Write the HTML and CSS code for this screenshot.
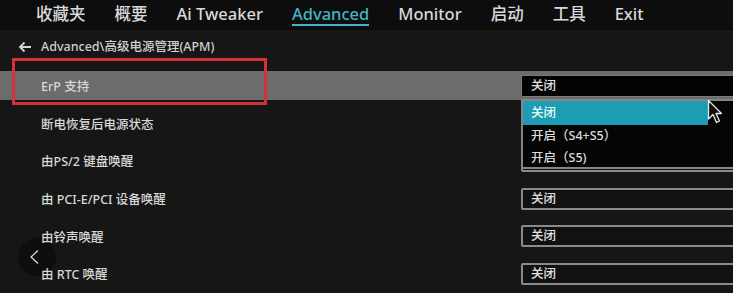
FILE: index.html
```html
<!DOCTYPE html>
<html lang="zh-CN">
<head>
<meta charset="utf-8">
<title>Advanced\高级电源管理(APM)</title>
<link rel="stylesheet" href="styles.css">
</head>
<body>
<div class="screen">
  <div class="back">
    <svg width="14" height="18" viewBox="0 0 14 18">
      <path d="M10 2.5 L3 9 L10 15.5" fill="none" stroke="#dcdcdc" stroke-width="1.2"/>
    </svg>
  </div>
  <nav class="nav">
    <span class="nav-item">收藏夹</span>
    <span class="nav-item">概要</span>
    <span class="nav-item">Ai Tweaker</span>
    <span class="nav-item active">Advanced</span>
    <span class="nav-item">Monitor</span>
    <span class="nav-item">启动</span>
    <span class="nav-item">工具</span>
    <span class="nav-item">Exit</span>
  </nav>
  <div class="crumb">
    <svg class="crumb-arrow" width="14" height="12" viewBox="0 0 14 12">
      <path d="M13 6 H2 M6.5 1.5 L2 6 L6.5 10.5" fill="none" stroke="#d4d4d4" stroke-width="1.8"/>
    </svg>
    <span>Advanced\高级电源管理(APM)</span>
  </div>
  <div class="rows">
    <div class="row selected"><span class="label">ErP 支持</span><div class="select open">关闭</div></div>
    <div class="row"><span class="label">断电恢复后电源状态</span><div class="select"></div></div>
    <div class="row"><span class="label">由PS/2 键盘唤醒</span><div class="select"></div></div>
    <div class="row"><span class="label">由 PCI-E/PCI 设备唤醒</span><div class="select">关闭</div></div>
    <div class="row"><span class="label">由铃声唤醒</span><div class="select">关闭</div></div>
    <div class="row"><span class="label">由 RTC 唤醒</span><div class="select">关闭</div></div>
  </div>

  <div class="highlight-box"></div>

  <ul class="dropdown">
    <li class="opt current">关闭</li>
    <li class="opt">开启（S4+S5）</li>
    <li class="opt">开启（S5)</li>
  </ul>

  <svg class="cursor" width="16" height="26" viewBox="0 0 16 26">
    <path d="M1.5 1.5 L1.5 20 L6 15.5 L9.5 23.5 L12.5 22 L9 14.5 L14.5 14.5 Z" fill="#111" stroke="#e8e8e8" stroke-width="1.3" stroke-linejoin="round"/>
  </svg>
</div>
</body>
</html>
```
FILE: styles.css
```css
html, body {
  margin: 0;
  padding: 0;
  background: #161616;
}
.screen {
  position: relative;
  width: 733px;
  height: 293px;
  overflow: hidden;
  background: #161616;
  font-family: "Noto Sans", "Noto Sans CJK SC", sans-serif;
  color: #d6d6d6;
}
.nav {
  position: relative;
  display: flex;
  gap: 29px;
  height: 30px;
  box-sizing: border-box;
  padding: 4px 0 0 36px;
  background: #0d0d0d;
  border-bottom: 1px solid #0a0a0a;
}
.nav-item {
  font-size: 16.5px;
  font-weight: 500;
  line-height: 20px;
  height: 20px;
  color: #d9d9d9;
  white-space: nowrap;
}
.nav-item.active {
  color: #43b4c4;
  border-bottom: 2px solid #43b4c4;
}
.crumb {
  position: relative;
  display: flex;
  align-items: center;
  gap: 9px;
  margin: 8px 0 0 18px;
  height: 18px;
  font-size: 12.5px;
  font-weight: 500;
  line-height: 18px;
  color: #cfcfcf;
}
.crumb-arrow {
  flex: none;
}
.rows {
  position: relative;
  display: flex;
  flex-direction: column;
  gap: 8.7px;
  margin-top: 15px;
}
.row {
  display: flex;
  align-items: center;
  height: 29px;
}
.row.selected {
  background: #6c6c6c;
}
.label {
  padding-left: 41px;
  font-size: 12.5px;
  font-weight: 500;
  color: #d8d8d8;
}
.select {
  margin-left: auto;
  margin-right: -6px;
  flex: 0 0 218px;
  box-sizing: border-box;
  height: 22px;
  padding-left: 8px;
  border: 2px solid #8a8a8a;
  border-radius: 2px;
  background: #111;
  font-size: 12.5px;
  font-weight: 500;
  line-height: 18px;
  color: #e0e0e0;
}
.select.open {
  background: #020202;
  border-color: #7a7a7a;
  border-width: 1px;
  padding-left: 9px;
  line-height: 20px;
}
.highlight-box {
  position: absolute;
  left: 12px;
  top: 58px;
  width: 249px;
  height: 41px;
  border: 3px solid #d6303a;
}
.dropdown {
  position: absolute;
  left: 521px;
  top: 99px;
  width: 220px;
  height: 70px;
  box-sizing: border-box;
  margin: 0;
  padding: 0;
  list-style: none;
  background: #050505;
  border: 2px solid #858585;
}
.opt {
  height: 22px;
  line-height: 22px;
  padding-left: 8px;
  font-size: 12.5px;
  font-weight: 500;
  color: #dcdcdc;
}
.opt.current {
  height: 24px;
  line-height: 24px;
  width: 185px;
  box-sizing: border-box;
  background: #1c9db3;
  color: #eaf6f8;
}
.cursor {
  position: absolute;
  left: 707px;
  top: 99px;
}
.back {
  position: absolute;
  left: 18px;
  top: 238px;
  width: 38px;
  height: 38px;
  border-radius: 50%;
  background: #0e0e0e;
  display: flex;
  align-items: center;
  justify-content: center;
}
.back svg {
  margin-right: 4px;
}
```
